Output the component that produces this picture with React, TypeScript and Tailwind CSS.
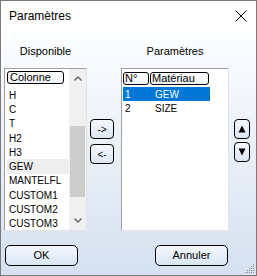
import { ReactNode } from 'react'

const font = { fontFamily: '"Liberation Sans", Arial, sans-serif' }

const available = ['H', 'C', 'T', 'H2', 'H3', 'GEW', 'MANTELFL', 'CUSTOM1', 'CUSTOM2', 'CUSTOM3']
const selected = [
  { n: '1', name: 'GEW' },
  { n: '2', name: 'SIZE' },
]

function HeaderButton({ children, className = '' }: { children: ReactNode; className?: string }) {
  return (
    <div
      className={`h-[13px] rounded-[3px] border border-black bg-gradient-to-b from-white to-[#eef2f8] px-[2px] text-[11px] leading-[11px] text-black ${className}`}
    >
      {children}
    </div>
  )
}

function SmallButton({ children }: { children: ReactNode }) {
  return (
    <div className="flex h-[20px] w-full items-center justify-center rounded-[4px] border border-black bg-gradient-to-b from-[#f4f8fd] to-[#dbe6f4] text-[10px] text-black">
      {children}
    </div>
  )
}

function DialogButton({ label }: { label: string }) {
  return (
    <div className="flex h-[21px] w-[73px] items-center justify-center rounded-[5px] border border-black bg-gradient-to-b from-[#f3f7fc] to-[#dae6f4] text-[11px] text-black">
      {label}
    </div>
  )
}

export default function App() {
  return (
    <div
      className="flex h-[276px] w-[257px] flex-col border border-[#7a7a7a] bg-white text-black"
      style={font}
    >
      {/* title bar */}
      <div className="flex h-[30px] items-center justify-between bg-white pl-[8px] pr-[9px]">
        <span className="text-[12px]">Paramètres</span>
        <svg width="12" height="12" viewBox="0 0 12 12">
          <path d="M0.5 0.5 L11.5 11.5 M11.5 0.5 L0.5 11.5" stroke="#000" strokeWidth="1" />
        </svg>
      </div>

      <div className="relative flex flex-1 flex-col bg-gradient-to-b from-[#fdfeff] to-[#d5e1f1]">
        {/* labels */}
        <div className="mt-[13px] flex h-[14px] items-center text-[11px]">
          <div className="ml-[3px] w-[83px] text-center">Disponible</div>
          <div className="ml-[34px] w-[108px] text-center">Paramètres</div>
        </div>

        <div className="mt-[10px] flex h-[163px]">
          {/* left list */}
          <div className="ml-[3px] flex w-[83px] border border-t-[#a0a0a0] border-l-[#a0a0a0] border-b-[#e3e3e3] border-r-[#e3e3e3] bg-white">
            <div className="flex-1 pl-[2px] pt-[2px]">
              <HeaderButton className="w-[57px] pl-[2px]">Colonne</HeaderButton>
              <div className="mt-[4px] text-[10px]">
                {available.map((c) => (
                  <div
                    key={c}
                    className={`flex h-[14.3px] items-center pl-[2px] ${c === 'GEW' ? 'bg-[#eeeeee]' : ''}`}
                  >
                    {c}
                  </div>
                ))}
              </div>
            </div>
            <div className="flex w-[17px] flex-col items-center bg-[#f0f0f0]">
              <svg className="mt-[7px]" width="8" height="5" viewBox="0 0 8 5">
                <path d="M0.5 4.5 L4 1 L7.5 4.5" stroke="#606060" strokeWidth="1.4" fill="none" />
              </svg>
              <div className="mt-[45px] h-[71px] w-[15px] bg-[#cdcdcd]" />
              <svg className="mt-[21px]" width="8" height="5" viewBox="0 0 8 5">
                <path d="M0.5 0.5 L4 4 L7.5 0.5" stroke="#606060" strokeWidth="1.4" fill="none" />
              </svg>
            </div>
          </div>

          {/* move buttons */}
          <div className="ml-[3px] flex w-[24px] flex-col gap-[5px] pt-[51px]">
            <SmallButton>-&gt;</SmallButton>
            <SmallButton>&lt;-</SmallButton>
          </div>

          {/* right list */}
          <div className="ml-[7px] w-[108px] border border-t-[#a0a0a0] border-l-[#a0a0a0] border-b-[#e3e3e3] border-r-[#e3e3e3] bg-white pl-[1px] pt-[3px]">
            <div className="flex gap-[1px]">
              <HeaderButton className="w-[26px] pl-[1px]">N°</HeaderButton>
              <HeaderButton className="w-[59px] pl-[1px]">Matériau</HeaderButton>
            </div>
            <div className="mt-[2px] w-[87px] text-[10px]">
              {selected.map((r, i) => (
                <div
                  key={r.n}
                  className={`flex h-[14.3px] items-center ${i === 0 ? 'bg-[#0078d7] text-white' : ''}`}
                >
                  <span className="w-[32px] pl-[2px]">{r.n}</span>
                  <span>{r.name}</span>
                </div>
              ))}
            </div>
          </div>

          {/* order buttons */}
          <div className="ml-[5px] flex w-[16px] flex-col gap-[3px] pt-[51px]">
            <SmallButton>
              <svg width="8" height="8" viewBox="0 0 8 8">
                <path d="M4 0.5 L7.5 7.5 L0.5 7.5 Z" fill="#000" />
              </svg>
            </SmallButton>
            <SmallButton>
              <svg width="8" height="8" viewBox="0 0 8 8">
                <path d="M0.5 0.5 L7.5 0.5 L4 7.5 Z" fill="#000" />
              </svg>
            </SmallButton>
          </div>
        </div>

        {/* dialog buttons */}
        <div className="mt-[14px] flex justify-between pl-[4px] pr-[28px]">
          <DialogButton label="OK" />
          <DialogButton label="Annuler" />
        </div>

        <svg className="absolute bottom-[1px] right-[1px]" width="11" height="11" viewBox="0 0 11 11">
          {[
            [9, 1],
            [9, 3],
            [7, 3],
            [9, 5],
            [7, 5],
            [5, 5],
            [9, 7],
            [7, 7],
            [5, 7],
            [3, 7],
            [9, 9],
            [7, 9],
            [5, 9],
            [3, 9],
            [1, 9],
          ].map(([x, y]) => (
            <rect key={`${x}-${y}`} x={x} y={y} width="1" height="1" fill="#8a8a8a" />
          ))}
        </svg>
      </div>
    </div>
  )
}
